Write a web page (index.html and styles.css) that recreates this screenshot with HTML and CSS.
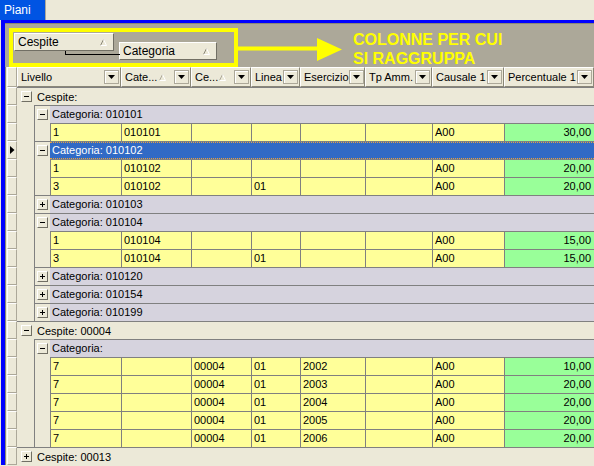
FILE: index.html
```html
<!DOCTYPE html>
<html>
<head>
<meta charset="utf-8">
<title>Piani</title>
<link rel="stylesheet" href="styles.css">
</head>
<body>
<div class="tabbar"><div class="tab">Piani</div></div>
<div class="frame">
  <div class="groupby">
    <div class="gbtn g-ces"><span>Cespite</span><svg class="st" width="7" height="7" viewBox="0 0 7 7"><path d="M0.5 6.5L3.5 0.5" stroke="#8a8778" fill="none"/><path d="M3.5 0.5L6.5 6.5H0.5" stroke="#fff" fill="none"/></svg></div>
    <div class="gbtn g-cat"><span>Categoria</span><svg class="st" width="7" height="7" viewBox="0 0 7 7"><path d="M0.5 6.5L3.5 0.5" stroke="#8a8778" fill="none"/><path d="M3.5 0.5L6.5 6.5H0.5" stroke="#fff" fill="none"/></svg></div>
    <div class="callout"></div>
    <svg class="arrow" width="105" height="25" viewBox="0 0 105 25"><rect x="0" y="9.5" width="81" height="4" fill="#ffff00"/><polygon points="79,1 104,12.5 79,24" fill="#ffff00"/></svg>
    <div class="note">COLONNE PER CUI<br>SI RAGGRUPPA</div>
  </div>

  <div class="hdr">
    <div class="sel"><i></i></div>
    <div class="hc w1"><span class="ht">Livello</span><span class="dd"><svg width="7" height="4" viewBox="0 0 7 4"><path d="M0 0H7L3.5 4Z" fill="#000"/></svg></span></div>
    <div class="hc w2"><span class="ht">Cate...</span><svg class="st hs" width="7" height="7" viewBox="0 0 7 7"><path d="M0.5 6.5L3.5 0.5" stroke="#aca899" fill="none"/><path d="M3.5 0.5L6.5 6.5H0.5" stroke="#fff" fill="none"/></svg><span class="dd"><svg width="7" height="4" viewBox="0 0 7 4"><path d="M0 0H7L3.5 4Z" fill="#000"/></svg></span></div>
    <div class="hc w3"><span class="ht">Ce...</span><svg class="st hs" width="7" height="7" viewBox="0 0 7 7"><path d="M0.5 6.5L3.5 0.5" stroke="#aca899" fill="none"/><path d="M3.5 0.5L6.5 6.5H0.5" stroke="#fff" fill="none"/></svg><span class="dd"><svg width="7" height="4" viewBox="0 0 7 4"><path d="M0 0H7L3.5 4Z" fill="#000"/></svg></span></div>
    <div class="hc w4"><span class="ht">Linea</span><span class="dd"><svg width="7" height="4" viewBox="0 0 7 4"><path d="M0 0H7L3.5 4Z" fill="#000"/></svg></span></div>
    <div class="hc w5"><span class="ht">Esercizio</span><span class="dd"><svg width="7" height="4" viewBox="0 0 7 4"><path d="M0 0H7L3.5 4Z" fill="#000"/></svg></span></div>
    <div class="hc w6"><span class="ht">Tp Amm.</span><span class="dd"><svg width="7" height="4" viewBox="0 0 7 4"><path d="M0 0H7L3.5 4Z" fill="#000"/></svg></span></div>
    <div class="hc w7"><span class="ht">Causale 1</span><span class="dd"><svg width="7" height="4" viewBox="0 0 7 4"><path d="M0 0H7L3.5 4Z" fill="#000"/></svg></span></div>
    <div class="hc w8"><span class="ht">Percentuale 1</span><span class="dd"><svg width="7" height="4" viewBox="0 0 7 4"><path d="M0 0H7L3.5 4Z" fill="#000"/></svg></span></div>
  </div>

  <div class="grid">
    <div class="row"><div class="sel"><i></i></div><div class="g0"><span class="tb"><svg width="9" height="9" viewBox="0 0 9 9"><path d="M2 4.5H7" stroke="#000"/></svg></span><span class="lbl">Cespite:</span></div></div>

    <div class="row"><div class="sel"><i></i></div><div class="ind"></div><div class="g1"><div class="pad"><span class="tb"><svg width="9" height="9" viewBox="0 0 9 9"><path d="M2 4.5H7" stroke="#000"/></svg></span></div><div class="g1b">Categoria: 010101</div></div></div>
    <div class="row"><div class="sel"><i></i></div><div class="ind"></div><div class="dr"><div class="pad"></div><div class="c w1">1</div><div class="c w2">010101</div><div class="c w3"></div><div class="c w4"></div><div class="c w5"></div><div class="c w6"></div><div class="c w7">A00</div><div class="c w8 num">30,00</div></div></div>

    <div class="row"><div class="sel cur"><i><svg width="5" height="8" viewBox="0 0 5 8"><path d="M0 0L4.5 4L0 8Z" fill="#000"/></svg></i></div><div class="ind"></div><div class="g1 on"><div class="pad"><span class="tb"><svg width="9" height="9" viewBox="0 0 9 9"><path d="M2 4.5H7" stroke="#000"/></svg></span></div><div class="g1b">Categoria: 010102</div></div></div>
    <div class="row"><div class="sel"><i></i></div><div class="ind"></div><div class="dr"><div class="pad"></div><div class="c w1">1</div><div class="c w2">010102</div><div class="c w3"></div><div class="c w4"></div><div class="c w5"></div><div class="c w6"></div><div class="c w7">A00</div><div class="c w8 num">20,00</div></div></div>
    <div class="row"><div class="sel"><i></i></div><div class="ind"></div><div class="dr"><div class="pad"></div><div class="c w1">3</div><div class="c w2">010102</div><div class="c w3"></div><div class="c w4">01</div><div class="c w5"></div><div class="c w6"></div><div class="c w7">A00</div><div class="c w8 num">20,00</div></div></div>

    <div class="row"><div class="sel"><i></i></div><div class="ind"></div><div class="g1"><div class="pad"><span class="tb"><svg width="9" height="9" viewBox="0 0 9 9"><path d="M2 4.5H7M4.5 2V7" stroke="#000"/></svg></span></div><div class="g1b">Categoria: 010103</div></div></div>

    <div class="row"><div class="sel"><i></i></div><div class="ind"></div><div class="g1"><div class="pad"><span class="tb"><svg width="9" height="9" viewBox="0 0 9 9"><path d="M2 4.5H7" stroke="#000"/></svg></span></div><div class="g1b">Categoria: 010104</div></div></div>
    <div class="row"><div class="sel"><i></i></div><div class="ind"></div><div class="dr"><div class="pad"></div><div class="c w1">1</div><div class="c w2">010104</div><div class="c w3"></div><div class="c w4"></div><div class="c w5"></div><div class="c w6"></div><div class="c w7">A00</div><div class="c w8 num">15,00</div></div></div>
    <div class="row"><div class="sel"><i></i></div><div class="ind"></div><div class="dr"><div class="pad"></div><div class="c w1">3</div><div class="c w2">010104</div><div class="c w3"></div><div class="c w4">01</div><div class="c w5"></div><div class="c w6"></div><div class="c w7">A00</div><div class="c w8 num">15,00</div></div></div>

    <div class="row"><div class="sel"><i></i></div><div class="ind"></div><div class="g1"><div class="pad"><span class="tb"><svg width="9" height="9" viewBox="0 0 9 9"><path d="M2 4.5H7M4.5 2V7" stroke="#000"/></svg></span></div><div class="g1b">Categoria: 010120</div></div></div>
    <div class="row"><div class="sel"><i></i></div><div class="ind"></div><div class="g1"><div class="pad"><span class="tb"><svg width="9" height="9" viewBox="0 0 9 9"><path d="M2 4.5H7M4.5 2V7" stroke="#000"/></svg></span></div><div class="g1b">Categoria: 010154</div></div></div>
    <div class="row"><div class="sel"><i></i></div><div class="ind"></div><div class="g1"><div class="pad"><span class="tb"><svg width="9" height="9" viewBox="0 0 9 9"><path d="M2 4.5H7M4.5 2V7" stroke="#000"/></svg></span></div><div class="g1b">Categoria: 010199</div></div></div>

    <div class="row"><div class="sel"><i></i></div><div class="g0"><span class="tb"><svg width="9" height="9" viewBox="0 0 9 9"><path d="M2 4.5H7" stroke="#000"/></svg></span><span class="lbl">Cespite: 00004</span></div></div>
    <div class="row"><div class="sel"><i></i></div><div class="ind"></div><div class="g1"><div class="pad"><span class="tb"><svg width="9" height="9" viewBox="0 0 9 9"><path d="M2 4.5H7" stroke="#000"/></svg></span></div><div class="g1b">Categoria:</div></div></div>
    <div class="row"><div class="sel"><i></i></div><div class="ind"></div><div class="dr"><div class="pad"></div><div class="c w1">7</div><div class="c w2"></div><div class="c w3">00004</div><div class="c w4">01</div><div class="c w5">2002</div><div class="c w6"></div><div class="c w7">A00</div><div class="c w8 num">10,00</div></div></div>
    <div class="row"><div class="sel"><i></i></div><div class="ind"></div><div class="dr"><div class="pad"></div><div class="c w1">7</div><div class="c w2"></div><div class="c w3">00004</div><div class="c w4">01</div><div class="c w5">2003</div><div class="c w6"></div><div class="c w7">A00</div><div class="c w8 num">20,00</div></div></div>
    <div class="row"><div class="sel"><i></i></div><div class="ind"></div><div class="dr"><div class="pad"></div><div class="c w1">7</div><div class="c w2"></div><div class="c w3">00004</div><div class="c w4">01</div><div class="c w5">2004</div><div class="c w6"></div><div class="c w7">A00</div><div class="c w8 num">20,00</div></div></div>
    <div class="row"><div class="sel"><i></i></div><div class="ind"></div><div class="dr"><div class="pad"></div><div class="c w1">7</div><div class="c w2"></div><div class="c w3">00004</div><div class="c w4">01</div><div class="c w5">2005</div><div class="c w6"></div><div class="c w7">A00</div><div class="c w8 num">20,00</div></div></div>
    <div class="row"><div class="sel"><i></i></div><div class="ind"></div><div class="dr"><div class="pad"></div><div class="c w1">7</div><div class="c w2"></div><div class="c w3">00004</div><div class="c w4">01</div><div class="c w5">2006</div><div class="c w6"></div><div class="c w7">A00</div><div class="c w8 num">20,00</div></div></div>

    <div class="row"><div class="sel"><i></i></div><div class="g0"><span class="tb"><svg width="9" height="9" viewBox="0 0 9 9"><path d="M2 4.5H7M4.5 2V7" stroke="#000"/></svg></span><span class="lbl">Cespite: 00013</span></div></div>
  </div>
</div>
</body>
</html>
```
FILE: styles.css
```css
* { box-sizing: border-box; }
html, body { margin: 0; padding: 0; }
body {
  width: 594px;
  height: 466px;
  overflow: hidden;
  background: #ece9d8;
  font-family: "Liberation Sans", Arial, sans-serif;
  font-size: 11px;
  color: #000;
}
svg { display: block; }

.tabbar { height: 20px; display: flex; }
.tab {
  width: 46px;
  height: 20px;
  background: #0054e3;
  color: #fff;
  font-size: 12px;
  line-height: 20px;
  padding-left: 4px;
  border-right: 1px solid #aca899;
}

.frame {
  margin-left: 1px;
  border-left: 4px solid #0000ff;
  border-top: 3px solid #0000ff;
}

.groupby {
  position: relative;
  height: 44px;
  background: #aca899;
  display: flex;
  align-items: flex-start;
  padding-left: 9px;
  border-top: 1px solid #8a8778;
}
.gbtn {
  position: relative;
  height: 18px;
  display: flex;
  align-items: center;
  justify-content: space-between;
  background: #ece9d8;
  border-top: 1px solid #fff;
  border-left: 1px solid #fff;
  border-right: 1px solid #716f64;
  border-bottom: 1px solid #716f64;
  padding: 0 6px 0 3px;
  font-size: 12px;
}
.g-ces { width: 100px; margin-top: 9px; }
.g-cat { width: 98px; margin-top: 18px; margin-left: 5px; }
.g-cat::before {
  content: "";
  position: absolute;
  left: -55px;
  top: 8px;
  width: 54px;
  height: 3px;
  border-left: 1px solid #000;
  border-bottom: 1px solid #000;
}
.callout {
  position: absolute;
  left: 4px;
  top: 4px;
  width: 229px;
  height: 39px;
  border: 4px solid #ffff00;
}
.arrow { position: absolute; left: 233px; top: 13px; }
.note {
  position: absolute;
  left: 348px;
  top: 6px;
  color: #ffff00;
  font-weight: bold;
  font-size: 16px;
  line-height: 19px;
}

.hdr { display: flex; height: 20px; }
.sel {
  width: 12px;
  flex: none;
  border-left: 1px solid #8a8778;
  padding-left: 1px;
  background: #ece9d8;
}
.sel i {
  display: flex;
  align-items: center;
  justify-content: center;
  height: 100%;
  border-top: 1px solid #fff;
  border-left: 1px solid #fff;
  border-right: 1px solid #aca899;
  border-bottom: 1px solid #aca899;
}
.hc {
  flex: none;
  height: 20px;
  display: flex;
  align-items: center;
  background: #ece9d8;
  border-top: 1px solid #fff;
  border-left: 1px solid #fff;
  border-right: 1px solid #8a8778;
  border-bottom: 1px solid #8a8778;
  padding: 0 1px 0 3px;
  white-space: nowrap;
  overflow: hidden;
}
.ht { flex: 1; }
.hs { margin-right: 8px; }
.dd {
  flex: none;
  width: 15px;
  height: 14px;
  display: flex;
  align-items: center;
  justify-content: center;
  background: #ece9d8;
  border: 1px solid #aca899;
  box-shadow: inset 1px 1px #fff;
}

.w1 { width: 104px; }
.w2 { width: 70px; }
.w3 { width: 60px; }
.w4 { width: 49px; }
.w5 { width: 65px; }
.w6 { width: 67px; }
.w7 { width: 72px; }
.w8 { flex: 1; }
.c.w1 { width: 71px; }

.row { display: flex; height: 18px; }
.g0 {
  flex: 1;
  display: flex;
  align-items: center;
  border-top: 1px solid #808080;
  padding-left: 4px;
}
.lbl { margin-left: 5px; }
.tb {
  flex: none;
  width: 11px;
  height: 11px;
  display: flex;
  align-items: center;
  justify-content: center;
  background: #ece9d8;
  border-top: 1px solid #fff;
  border-left: 1px solid #fff;
  border-right: 1px solid #716f64;
  border-bottom: 1px solid #716f64;
}
.ind { width: 17px; flex: none; }
.g1 {
  flex: 1;
  display: flex;
  border-left: 1px solid #808080;
  border-top: 1px solid #808080;
}
.pad {
  width: 15px;
  flex: none;
  display: flex;
  align-items: center;
  padding-left: 2px;
}
.g1b {
  flex: 1;
  background: #d6d3de;
  line-height: 17px;
  padding-left: 2px;
  white-space: nowrap;
}
.g1.on .g1b {
  background: #316ac5;
  color: #fff;
  line-height: 15px;
  border-top: 1px dotted #e8a040;
  border-bottom: 1px dotted #e8a040;
}
.dr {
  flex: 1;
  display: flex;
  border-left: 1px solid #808080;
}
.c {
  flex: none;
  height: 18px;
  background: #ffff99;
  border-top: 1px solid #808080;
  border-left: 1px solid #808080;
  line-height: 17px;
  padding-left: 2px;
  white-space: nowrap;
  overflow: hidden;
}
.c.w8 { flex: 1; background: #99ff99; }
.num { text-align: right; padding-right: 3px; }
```
